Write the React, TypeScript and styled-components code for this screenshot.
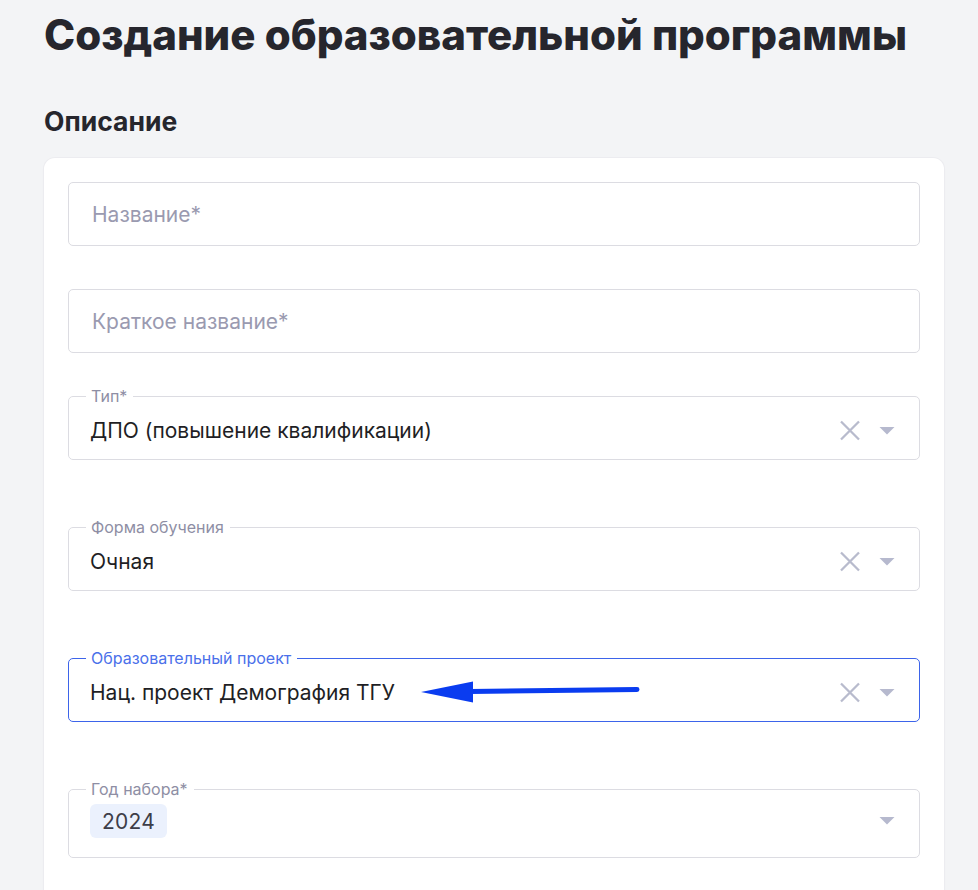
import React from "react";
import styled, { createGlobalStyle } from "styled-components";

const GlobalStyle = createGlobalStyle`
  html, body {
    margin: 0;
    padding: 0;
    background: #f3f4f6;
    font-family: Inter, "Noto Sans", sans-serif;
    color: #1f1f25;
  }
  * { box-sizing: border-box; }
`;

const Viewport = styled.div`
  height: 100vh;
  overflow: hidden;
`;

const Page = styled.main`
  padding: 0 34px 0 44px;
`;

const Title = styled.h1`
  margin: 10px 0 0;
  font-size: 42px;
  line-height: 50px;
  font-weight: 800;
  color: #26262d;
  letter-spacing: 0;
`;

const SectionTitle = styled.h2`
  margin: 45px 0 0;
  font-size: 26.5px;
  line-height: 32px;
  font-weight: 700;
  color: #26262d;
`;

const Card = styled.section`
  margin-top: 21px;
  background: #ffffff;
  border-radius: 11px;
  padding: 24px;
  box-shadow: 0 0 0 1px #ececf0, 0 1px 3px rgba(0, 0, 0, 0.03);
  display: flex;
  flex-direction: column;
  gap: 43px;
`;

const TextInput = styled.input`
  display: block;
  width: 100%;
  height: 64px;
  margin: 0;
  padding: 0 23px;
  border: 1px solid #dcdce2;
  border-radius: 5px;
  background: #fff;
  font-family: inherit;
  font-size: 21px;
  color: #1f1f25;
  outline: none;
  &::placeholder {
    color: #9a9ab0;
  }
`;

const Fieldset = styled.fieldset<{ $focused?: boolean }>`
  margin: -8px 0 24px;
  padding: 0 20px 0 21px;
  min-width: 0;
  border: 1px solid ${(p) => (p.$focused ? "#3d64ea" : "#dcdce2")};
  border-radius: 5px;
`;

const Legend = styled.legend<{ $focused?: boolean }>`
  margin-left: -4px;
  padding: 0 6px 0 5px;
  font-size: 16px;
  line-height: 16px;
  color: ${(p) => (p.$focused ? "#4a70ea" : "#8e8ea4")};
`;

const Row = styled.div<{ $chips?: boolean }>`
  position: relative;
  display: flex;
  align-items: center;
  height: ${(p) => (p.$chips ? "34px" : "41px")};
  margin: ${(p) => (p.$chips ? "7px 0 19px" : "6px 0 8px")};
`;

const Value = styled.div`
  flex: 1;
  min-width: 0;
  font-size: 21px;
  line-height: 24px;
  color: #1f1f25;
  white-space: nowrap;
`;

const Chips = styled.div`
  flex: 1;
  display: flex;
  gap: 8px;
`;

const Chip = styled.span`
  display: inline-flex;
  align-items: center;
  height: 34px;
  padding: 0 12px;
  border-radius: 6px;
  background: #ebf1fd;
  font-size: 21px;
  color: #3d3d48;
  letter-spacing: 0.2px;
`;

const Icons = styled.div`
  display: flex;
  align-items: center;
  gap: 13px;
`;

const IconBox = styled.span`
  display: inline-flex;
  width: 24px;
  height: 24px;
`;

const Annotation = styled.svg`
  position: absolute;
  left: 325px;
  top: 5px;
  width: 240px;
  height: 30px;
  overflow: visible;
  pointer-events: none;
`;

const ClearIcon = () => (
  <IconBox>
    <svg width="24" height="24" viewBox="0 0 24 24">
      <path d="M3 2.5 L21 20.5 M21 2.5 L3 20.5" stroke="#b8bbcd" strokeWidth="2.3" fill="none" />
    </svg>
  </IconBox>
);

const CaretIcon = () => (
  <IconBox>
    <svg width="24" height="24" viewBox="0 0 24 24">
      <polygon points="4.5,8 19.5,8 12,15.5" fill="#b6b9ce" />
    </svg>
  </IconBox>
);

type SelectProps = {
  label: string;
  value?: string;
  chips?: string[];
  focused?: boolean;
  clearable?: boolean;
  children?: React.ReactNode;
};

const SelectField = ({ label, value, chips, focused, clearable = true, children }: SelectProps) => (
  <Fieldset $focused={focused}>
    <Legend $focused={focused}>{label}</Legend>
    <Row $chips={!!chips}>
      {chips ? (
        <Chips>
          {chips.map((c) => (
            <Chip key={c}>{c}</Chip>
          ))}
        </Chips>
      ) : (
        <Value>{value}</Value>
      )}
      <Icons>
        {clearable && <ClearIcon />}
        <CaretIcon />
      </Icons>
      {children}
    </Row>
  </Fieldset>
);

export default function App() {
  return (
    <Viewport>
      <GlobalStyle />
      <Page>
        <Title>Создание образовательной программы</Title>
        <SectionTitle>Описание</SectionTitle>
        <Card>
          <TextInput placeholder="Название*" />
          <TextInput placeholder="Краткое название*" />
          <SelectField label="Тип*" value="ДПО (повышение квалификации)" />
          <SelectField label="Форма обучения" value="Очная" />
          <SelectField label="Образовательный проект" value="Нац. проект Демография ТГУ" focused>
            <Annotation viewBox="0 0 240 30">
              <line x1="55" y1="14.5" x2="222" y2="12.5" stroke="#0a3cf0" strokeWidth="5" strokeLinecap="round" />
              <polygon points="6,15 58,4.5 58,25.5" fill="#0a3cf0" />
            </Annotation>
          </SelectField>
          <SelectField label="Год набора*" chips={["2024"]} clearable={false} />
        </Card>
      </Page>
    </Viewport>
  );
}
